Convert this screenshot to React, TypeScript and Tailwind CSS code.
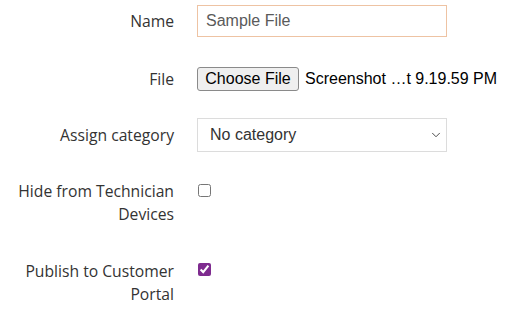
import { ChevronDown } from 'lucide-react'

const labelCls = "text-right text-[15.7px] leading-[23px] text-[#333] font-['Open_Sans',sans-serif]"

export default function App() {
  return (
    <div className="w-[512px] h-[318px] bg-white pt-[5px] overflow-hidden">
      <div className="grid grid-cols-[174px_250px] gap-x-[23px] items-start">
        {/* Name */}
        <div className={`${labelCls} h-[32px] flex items-center justify-end`}>Name</div>
        <div className="h-[32px] border border-[#eec3a3] flex items-center px-[8px] text-[16px] text-[#5a5a5a] font-['Liberation_Sans',Arial,sans-serif]">
          Sample File
        </div>

        {/* File */}
        <div className={`${labelCls} mt-[30px] h-[24px] flex items-center justify-end`}>File</div>
        <div className="mt-[30px] h-[24px] flex items-center w-[320px] font-['Liberation_Sans',Arial,sans-serif] text-[16px] text-black">
          <span className="h-[24px] w-[102px] flex items-center justify-center bg-[#efefef] border border-[#8a8a8a] rounded-[3px]">
            Choose File
          </span>
          <span className="ml-[6px] whitespace-nowrap">Screenshot …t 9.19.59 PM</span>
        </div>

        {/* Category */}
        <div className={`${labelCls} mt-[27px] h-[34px] flex items-center justify-end`}>Assign category</div>
        <div className="mt-[27px] h-[34px] border border-[#dcdcdc] flex items-center justify-between pl-[12px] pr-[3px] text-[16px] text-[#333] font-['Liberation_Sans',Arial,sans-serif]">
          <span>No category</span>
          <ChevronDown className="w-[14px] h-[14px] text-[#333]" strokeWidth={1.5} />
        </div>

        {/* Hide */}
        <div className={`${labelCls} mt-[28px]`}>Hide from Technician<br />Devices</div>
        <div className="mt-[28px] pt-[4px] pl-[1px] h-[46px]">
          <input type="checkbox" className="block w-[13px] h-[13px] m-0" />
        </div>

        {/* Publish */}
        <div className={`${labelCls} mt-[34px]`}>Publish to Customer<br />Portal</div>
        <div className="mt-[34px] pt-[3px] pl-[1px]">
          <input type="checkbox" defaultChecked className="block w-[13px] h-[13px] m-0 accent-[#7e2b8f]" />
        </div>
      </div>
    </div>
  )
}
